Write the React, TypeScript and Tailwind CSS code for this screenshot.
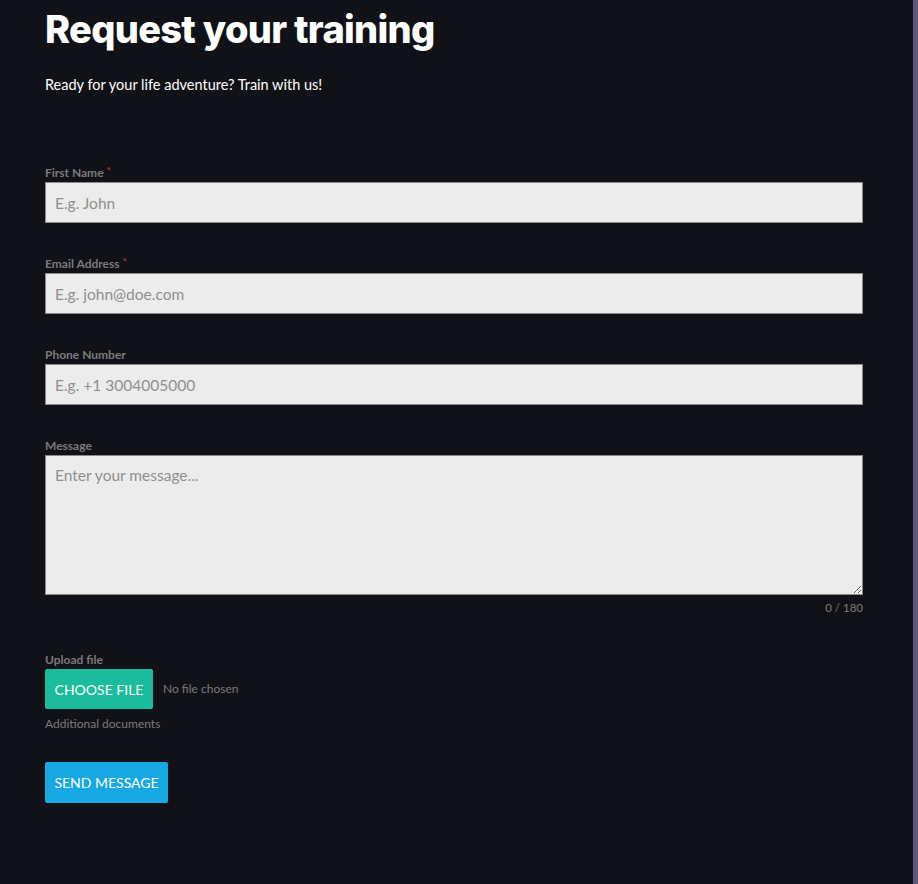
import { useState } from "react";

const fields = [
  { label: "First Name", required: true, placeholder: "E.g. John", type: "text" },
  { label: "Email Address", required: true, placeholder: "E.g. john@doe.com", type: "email" },
  { label: "Phone Number", required: false, placeholder: "E.g. +1 3004005000", type: "tel" },
];

const Label = ({ text, required }: { text: string; required?: boolean }) => (
  <label className="block h-[19px] text-[12px] font-bold leading-[19px] text-[#7b7b7d]">
    {text}
    {required && <span className="ml-[3px] align-top text-[10px] leading-[14px] text-[#d4254b]">*</span>}
  </label>
);

export default function App() {
  const [message, setMessage] = useState("");

  return (
    <div className="flex min-h-[884px] w-full bg-[#111217] font-['Lato',sans-serif]">
      <div className="flex-1 pl-[45px] pr-[50px]">
        <h1 className="mt-[6px] font-['Inter',sans-serif] text-[38px] font-extrabold leading-[46px] tracking-[-0.7px] text-white">
          Request your training
        </h1>
        <p className="mt-[23px] text-[14.5px] leading-[20px] text-white">
          Ready for your life adventure? Train with us!
        </p>

        <form className="mt-[68px]" onSubmit={(e) => e.preventDefault()}>
          {fields.map((f) => (
            <div key={f.label} className="mb-[31px]">
              <Label text={f.label} required={f.required} />
              <input
                type={f.type}
                placeholder={f.placeholder}
                className="block h-[41px] w-full border border-[#8a8a8a] bg-[#ececec] px-[9px] text-[15.5px] text-[#333] outline-none placeholder:text-[#8f8f8f]"
              />
            </div>
          ))}

          <div className="mt-[1px]">
            <Label text="Message" />
            <textarea
              value={message}
              maxLength={180}
              onChange={(e) => setMessage(e.target.value)}
              placeholder="Enter your message..."
              className="block h-[140px] w-full border border-[#8a8a8a] bg-[#ececec] px-[9px] py-[8px] text-[15.5px] text-[#333] outline-none placeholder:text-[#8f8f8f]"
            />
            <div className="mt-[5px] text-right text-[11.5px] leading-[16px] text-[#7b7b7d]">
              {message.length} / 180
            </div>
          </div>

          <div className="mt-[34px]">
            <Label text="Upload file" />
            <div className="flex items-center gap-[10px]">
              <button
                type="button"
                className="h-[40px] w-[108px] rounded-[2px] bg-[#1abc9c] text-[14px] text-white"
              >
                CHOOSE FILE
              </button>
              <span className="text-[12px] text-[#7b7b7d]">No file chosen</span>
            </div>
            <div className="mt-[7px] text-[12px] leading-[16px] text-[#7b7b7d]">Additional documents</div>
          </div>

          <button
            type="submit"
            className="mt-[30px] h-[41px] w-[123px] rounded-[2px] bg-[#17a8e3] text-[14px] text-white"
          >
            SEND MESSAGE
          </button>
        </form>
      </div>
      <div className="w-[5px] bg-[#5e5977]" />
    </div>
  );
}
